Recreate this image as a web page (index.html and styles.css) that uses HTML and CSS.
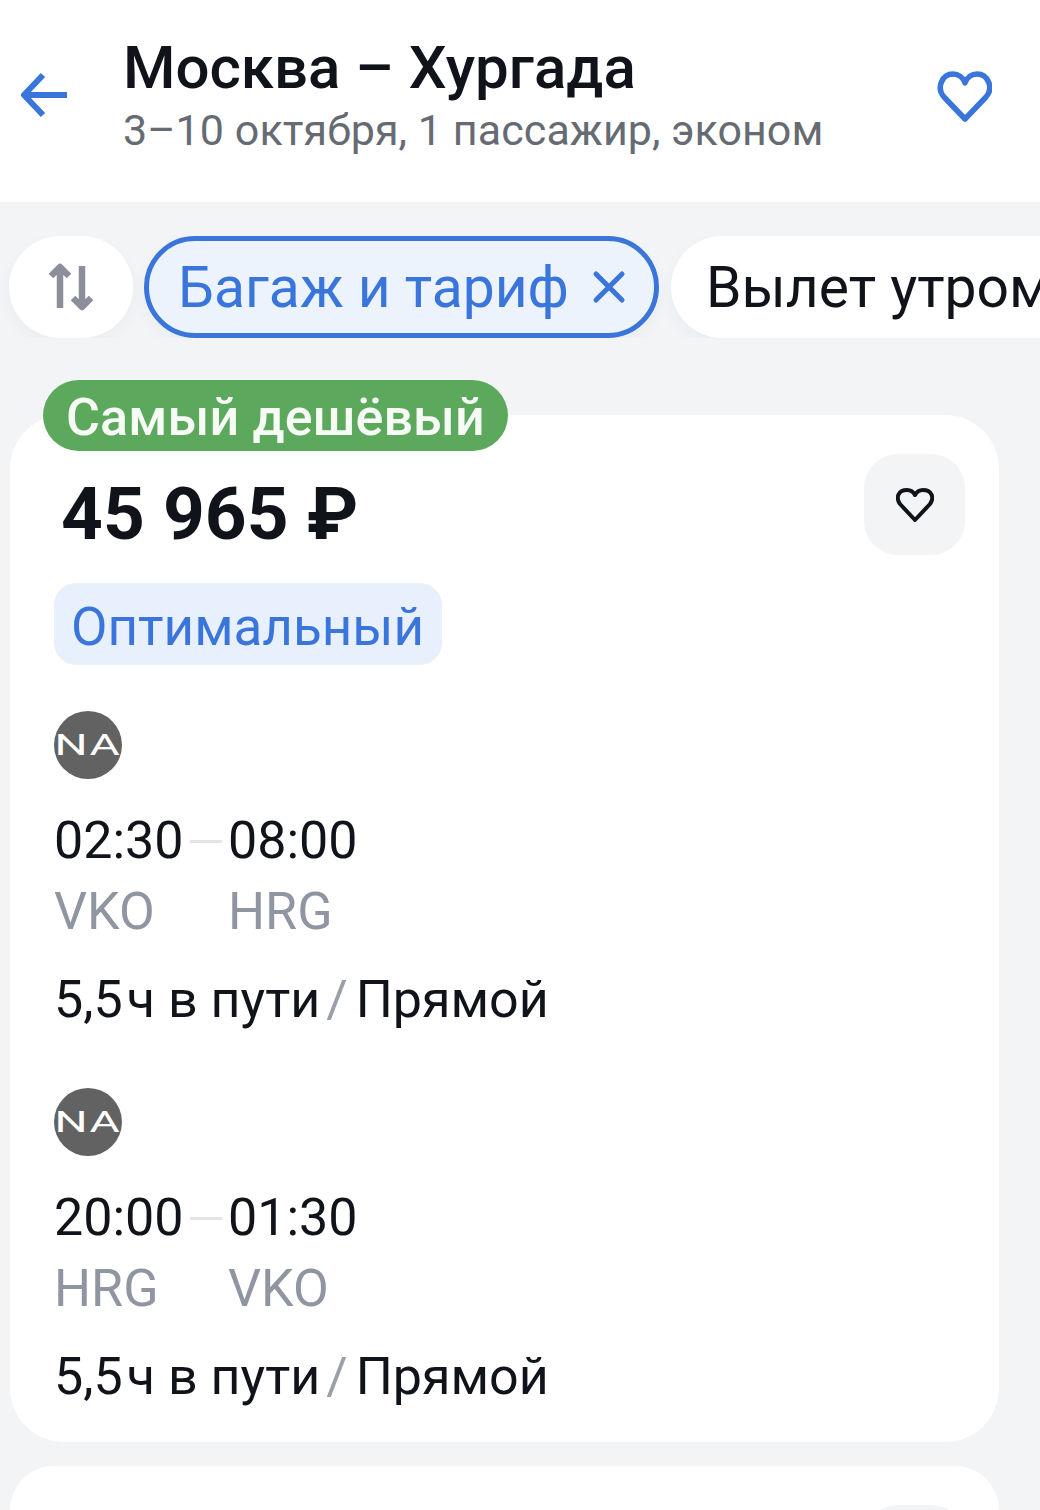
FILE: index.html
```html
<!DOCTYPE html>
<html lang="ru">
<head>
<meta charset="utf-8">
<title>Москва – Хургада</title>
<link rel="stylesheet" href="styles.css">
</head>
<body>
<header class="header">
  <button class="back" aria-label="Назад">
    <svg width="48" height="48" viewBox="0 0 48 48" fill="none" stroke="#3a75dc" stroke-width="6" stroke-linejoin="round"><path d="M47 24H5M23 4 4 24l19 20"/></svg>
  </button>
  <div class="route">
    <h1 class="route-title">Москва – Хургада</h1>
    <p class="route-sub">3–10 октября, 1 пассажир, эконом</p>
  </div>
  <button class="fav" aria-label="В избранное">
    <svg width="56" height="54" viewBox="0 0 56 54" fill="none" stroke="#3a75dc" stroke-width="5.5" stroke-linejoin="round"><path d="M29 50 8 28C0 19 6 5 17 5c5 0 10 3 12 9 2-6 7-9 12-9 11 0 17 14 9 23Z"/></svg>
  </button>
</header>
<main class="content">
  <div class="chips">
    <button class="chip chip-sort" aria-label="Сортировка">
      <svg width="48" height="48" viewBox="0 0 48 48" fill="none" stroke="#8c8f99" stroke-width="6.5" stroke-linejoin="round"><path d="M13 45V4M4 13l9-9 9 9M35 3v41M26 35l9 9 9-9"/></svg>
    </button>
    <button class="chip chip-active">Багаж и тариф
      <svg class="chip-x" width="34" height="34" viewBox="0 0 34 34" stroke="#3a75dc" stroke-width="5" stroke-linecap="round"><path d="M4 4l26 26M30 4 4 30"/></svg>
    </button>
    <button class="chip">Вылет утром</button>
  </div>
  <article class="card">
    <div class="badge">Самый дешёвый</div>
    <div class="card-top">
      <div class="price">45 965 ₽</div>
      <button class="card-fav" aria-label="В избранное">
        <svg width="38" height="36" viewBox="0 0 38 36" fill="none" stroke="#10141a" stroke-width="4" stroke-linejoin="round"><path d="M19 33 4 17C-1 10 3 3 11 3c3 0 6 1 8 5 2-4 5-5 8-5 8 0 12 7 7 14Z"/></svg>
      </button>
    </div>
    <div class="tariff">Оптимальный</div>
    <section class="leg">
      <div class="logo"><span class="logo-text">NA</span></div>
      <div class="times">
        <span class="time">02:30</span><span class="dash"></span><span class="time">08:00</span>
        <span class="code">VKO</span><span></span><span class="code">HRG</span>
      </div>
      <div class="info">5,5<span class="unit">ч</span> в пути<span class="slash">/</span>Прямой</div>
    </section>
    <section class="leg">
      <div class="logo"><span class="logo-text">NA</span></div>
      <div class="times">
        <span class="time">20:00</span><span class="dash"></span><span class="time">01:30</span>
        <span class="code">HRG</span><span></span><span class="code">VKO</span>
      </div>
      <div class="info">5,5<span class="unit">ч</span> в пути<span class="slash">/</span>Прямой</div>
    </section>
  </article>
  <article class="card card-next">
    <div class="card-top card-top-end">
      <button class="card-fav" aria-label="В избранное"></button>
    </div>
  </article>
</main>
</body>
</html>
```
FILE: styles.css
```css
* { box-sizing: border-box; }
html, body { margin: 0; height: 1510px; overflow: hidden; }
body { font-family: Roboto, "Noto Sans", sans-serif; background: #f2f4f6; color: #10141a; }
button { font: inherit; color: inherit; border: 0; background: none; padding: 0; }

.header { height: 202px; background: #fff; display: flex; align-items: flex-start; padding: 34px 48px 0 20px; }
.back { margin-top: 37px; width: 48px; height: 48px; display: block; }
.route { margin-left: 55px; flex: 1; }
.route-title { margin: 0; font-size: 60px; line-height: 68px; font-weight: 500; }
.route-sub { margin: 2px 0 0; font-size: 43px; line-height: 52px; letter-spacing: .08px; color: #666b73; white-space: nowrap; }
.fav { margin-top: 35px; width: 56px; height: 54px; }

.content { padding: 34px 0 0; }
.chips { display: flex; gap: 11px; padding-left: 9px; overflow: hidden; }
.chip { flex: none; height: 102px; border-radius: 51px; background: #fff; padding: 0 35px; font-size: 57px; display: flex; align-items: center; white-space: nowrap; box-shadow: 0 6px 16px rgba(60,70,90,.04); }
.chip-sort { width: 124px; padding: 0; justify-content: center; }
.chip-active { width: 515px; margin-right: 1px; padding: 0 29px; border: 5px solid #3a75dc; background: #edf3fd; color: #3a75dc; }
.chip-x { margin-left: 23px; flex: none; }

.card { position: relative; width: 989px; margin: 77px 0 0 10px; height: 1027px; padding: 39px 34px 0 44px; background: #fff; border-radius: 54px; }
.card-next { margin-top: 24px; height: 44px; border-radius: 54px 54px 0 0; overflow: hidden; }
.badge { position: absolute; left: 33px; top: -35px; width: 465px; height: 71px; padding-left: 23px; border-radius: 36px; background: #5ca95d; color: #f6fbf5; font-size: 52px; line-height: 76px; font-weight: 500; letter-spacing: .15px; white-space: nowrap; }
.card-top { display: flex; justify-content: space-between; align-items: flex-start; padding-left: 7px; }
.card-top-end { justify-content: flex-end; }
.price { font-size: 73px; line-height: 120px; font-weight: 700; }
.card-fav { flex: none; width: 101px; height: 101px; border-radius: 34px; background: #f2f4f6; display: flex; align-items: center; justify-content: center; }
.tariff { margin-top: 9px; width: 388px; height: 82px; border-radius: 22px; background: #e8f0fd; color: #3a75dc; font-size: 53px; line-height: 88px; padding-left: 17px; white-space: nowrap; }

.leg { margin-top: 46px; }
.leg + .leg { margin-top: 58px; }
.logo { width: 68px; height: 68px; border-radius: 50%; background: #626262; display: flex; align-items: center; justify-content: center; overflow: hidden; }
.logo-text { color: #fff; font-weight: 400; font-size: 29px; line-height: 1; letter-spacing: 1px; transform: scaleX(1.6); }
.times { margin-top: 32px; display: grid; grid-template-columns: 136px 38px auto; width: max-content; align-items: center; }
.time { font-size: 52px; line-height: 60px; }
.code { font-size: 52px; line-height: 82px; color: #8f96a1; }
.dash { height: 3px; margin-right: 6px; background: #e2e4e7; }
.info { margin-top: 17px; font-size: 52px; line-height: 60px; }
.unit { margin-left: 4px; }
.slash { color: #9aa0a9; margin: 0 8px 0 6px; }
```
